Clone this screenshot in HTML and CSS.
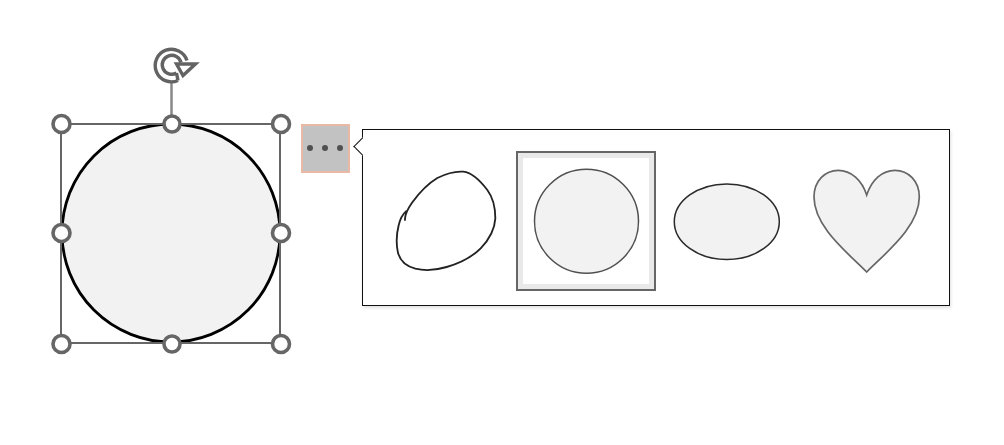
FILE: index.html
```html
<!DOCTYPE html>
<html lang="en">
<head>
<meta charset="utf-8">
<title>Ink to shape</title>
<link rel="stylesheet" href="styles.css">
</head>
<body>
<main class="page">
  <svg class="selection" viewBox="50 44 242 312" aria-label="Selected circle">
    <circle class="shape-main" cx="171" cy="233" r="109"/>
    <rect class="frame" x="61" y="124" width="219" height="219"/>
    <line class="stem" x1="171.5" y1="82" x2="171.5" y2="116"/>
    <path class="rotate" d="M178 80.500A16.300 16.300 0 1 1 187 60.500M176.500 73A9.500 9.500 0 1 1 181 62.500M178 80.500L176.500 73"/>
    <path class="rotate rotate-head" d="M176.500 64H195.500L183 75.500Z"/>
    <circle class="handle" cx="61.500" cy="124" r="8.500"/>
    <circle class="handle" cx="172" cy="124" r="8"/>
    <circle class="handle" cx="281" cy="124" r="8.500"/>
    <circle class="handle" cx="61.500" cy="233" r="8.500"/>
    <circle class="handle" cx="281" cy="233" r="8.500"/>
    <circle class="handle" cx="61.500" cy="344" r="8.500"/>
    <circle class="handle" cx="172" cy="344" r="8"/>
    <circle class="handle" cx="281" cy="344" r="8.500"/>
  </svg>

  <button class="more" type="button" aria-label="More options">
    <span class="dot"></span><span class="dot"></span><span class="dot"></span>
  </button>

  <section class="popup" aria-label="Shape suggestions">
    <div class="tile">
      <svg class="tile-art" viewBox="78 93 420 420">
        <path class="ink" d="M165 300C164 285 172 268 186 248C205 222 232 192 262 174C290 160 315 153 340 155C368 158 392 184 412 210C430 234 436 262 436 295C434 330 418 358 392 385C365 412 328 430 290 441C260 450 225 453 196 446C170 439 150 422 144 398C138 372 140 340 146 316C150 298 156 284 168 274"/>
      </svg>
    </div>
    <div class="tile tile-selected">
      <svg class="tile-art" viewBox="0 0 126 126">
        <circle class="option" cx="63.500" cy="63.300" r="52"/>
      </svg>
    </div>
    <div class="tile">
      <svg class="tile-art" viewBox="0 0 140 140">
        <ellipse class="option option-dark" cx="70.800" cy="70.700" rx="52.500" ry="37.800"/>
      </svg>
    </div>
    <div class="tile">
      <svg class="tile-art" viewBox="0 0 140 140">
        <path class="option option-soft" d="M70.700 121C52 102 18 76 18 46C18 30 29 19.300 42.300 19.300C55 19.300 66 29 70.700 44C75.400 29 86 19.300 99 19.300C112.300 19.300 123.300 30 123.300 46C123.300 76 89.400 102 70.700 121Z"/>
      </svg>
    </div>
  </section>
</main>
</body>
</html>
```
FILE: styles.css
```css
html, body {
  margin: 0;
  background: #fff;
}

.page {
  display: flex;
  align-items: flex-start;
  padding: 44px 0 0 50px;
  height: 401px;
  overflow: hidden;
}

.selection {
  flex: none;
  width: 242px;
  height: 312px;
}

.shape-main {
  fill: #f2f2f2;
  stroke: #000;
  stroke-width: 2.800;
}

.frame {
  fill: none;
  stroke: #666;
  stroke-width: 2;
}

.stem {
  stroke: #888;
  stroke-width: 2.500;
}

.rotate {
  fill: none;
  stroke: #636363;
  stroke-width: 3.400;
}

.rotate-head {
  fill: #fff;
  stroke-width: 3.400;
  stroke-linejoin: miter;
}

.handle {
  fill: #fff;
  stroke: #666;
  stroke-width: 3.600;
}

.more {
  flex: none;
  box-sizing: border-box;
  display: flex;
  align-items: center;
  justify-content: center;
  gap: 9px;
  width: 49px;
  height: 49px;
  margin: 80px 0 0 9px;
  padding: 0 1px 1px 0;
  background: #c2c2c2;
  border: 2px solid #e9b9a6;
}

.dot {
  width: 6px;
  height: 6px;
  border-radius: 50%;
  background: #505050;
}

.popup {
  flex: none;
  position: relative;
  box-sizing: border-box;
  display: flex;
  width: 588px;
  height: 177px;
  margin: 85px 0 0 12px;
  padding: 21px 0 0 13px;
  background: #fff;
  border: 1px solid #111;
  box-shadow: 1px 2px 3px rgba(0, 0, 0, 0.12);
}

.popup::before {
  content: "";
  position: absolute;
  left: -7px;
  top: 10px;
  width: 12px;
  height: 12px;
  background: #fff;
  border-left: 1px solid #111;
  border-bottom: 1px solid #111;
  transform: rotate(45deg);
}

.tile {
  flex: none;
  box-sizing: border-box;
  width: 140px;
  height: 140px;
}

.tile-selected {
  border: 2px solid #666;
  outline: 5px solid #e9e9e9;
  outline-offset: -7px;
  padding: 5px;
}

.tile-art {
  display: block;
  width: 100%;
  height: 100%;
}

.ink {
  fill: none;
  stroke: #222;
  stroke-width: 5.500;
  stroke-linecap: round;
}

.option {
  fill: #f2f2f2;
  stroke: #505050;
  stroke-width: 1.500;
}

.option-dark {
  stroke: #2a2a2a;
}

.option-soft {
  stroke: #666;
  stroke-width: 1.700;
}
```
